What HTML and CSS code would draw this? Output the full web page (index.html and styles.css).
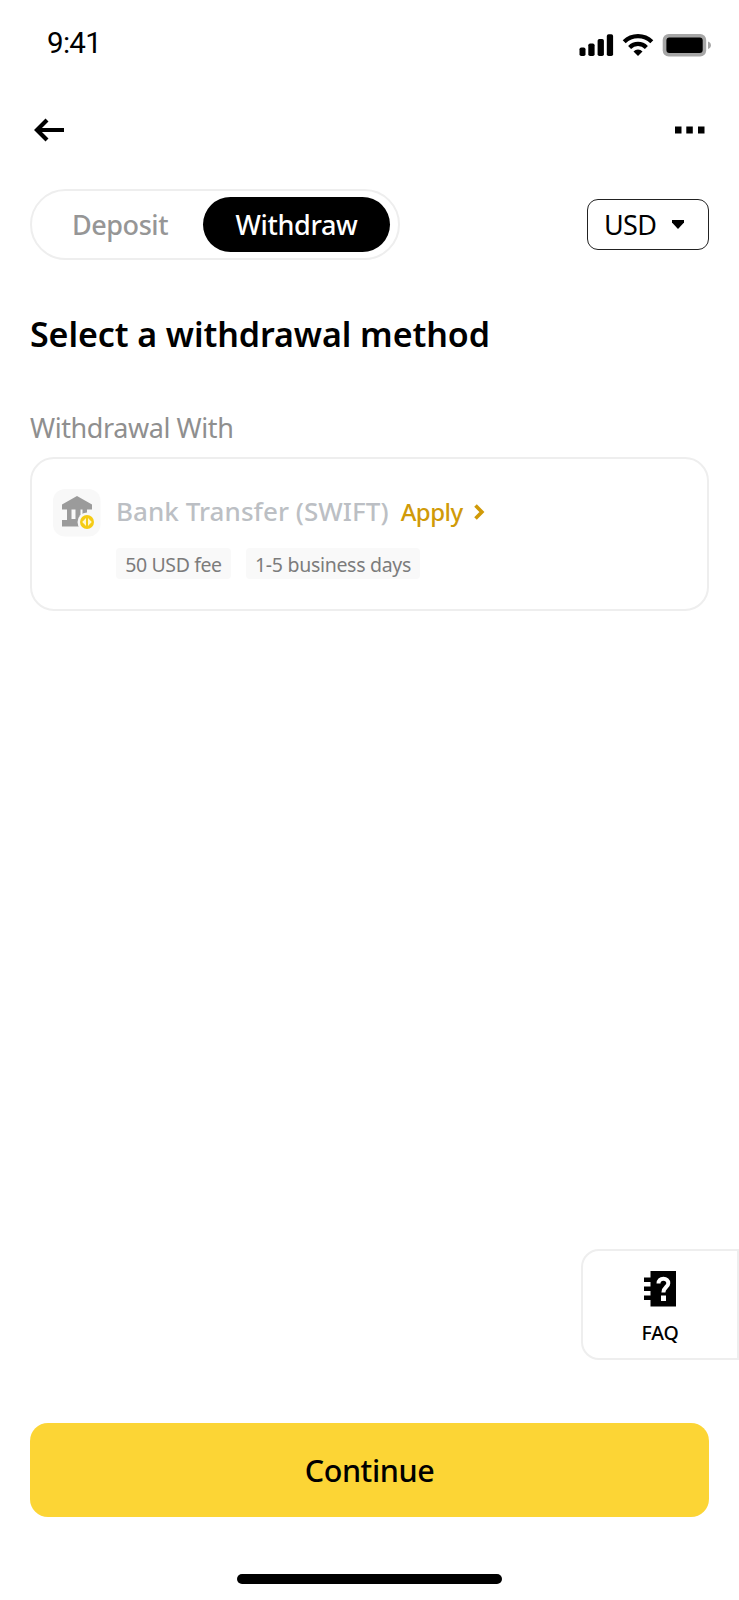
FILE: index.html
```html
<!DOCTYPE html>
<html lang="en">
<head>
<meta charset="utf-8">
<title>Withdraw</title>
<link rel="stylesheet" href="styles.css">
</head>
<body>
<div class="screen">
  <header class="status">
    <span class="time">9:41</span>
    <svg class="status-icons" width="134" height="26" viewBox="0 0 134 26">
      <rect x=".5" y="15.5" width="6" height="8.500" rx="1.800"/>
      <rect x="9.300" y="11.500" width="6.300" height="12.500" rx="1.800"/>
      <rect x="18.600" y="7" width="6.300" height="17" rx="1.800"/>
      <rect x="27.800" y="2.300" width="6.300" height="21.700" rx="1.800"/>
      <g fill="none" stroke="#000" stroke-width="4.200">
        <path d="M45.200 9.800a19.600 19.600 0 0 1 27.600 0"/>
        <path d="M50.600 15.400a11.900 11.900 0 0 1 16.800 0"/>
      </g>
      <path d="M54.500 19.400a6.400 6.400 0 0 1 9 0L59 24z"/>
      <rect x="83.700" y="2" width="43.500" height="22.500" rx="6" fill="#a6a6a6"/>
      <rect x="87.400" y="5.500" width="36.300" height="15.500" rx="3" fill="#000"/>
      <path d="M129 9.500c2.200.7 2.900 2 2.900 3.800s-.7 3-2.900 3.800z" fill="#a6a6a6"/>
    </svg>
  </header>

  <nav class="nav">
    <svg width="32" height="24" viewBox="0 0 32 24" fill="none" stroke="#000" stroke-width="4.200"><path d="M4 12h27M14 2 4 12l10 10"/></svg>
    <svg width="32" height="8" viewBox="0 0 32 8"><path d="M1 .5h6.500v7H1zM12.300.5h6.500v7h-6.500zM24 .5h6.500v7H24z"/></svg>
  </nav>

  <div class="controls">
    <div class="tabs">
      <span class="tab deposit">Deposit</span>
      <span class="tab active">Withdraw</span>
    </div>
    <div class="currency">
      <span class="code">USD</span>
      <svg width="12" height="9" viewBox="0 0 12 9"><path d="M0 0h12v2.600L6 9 0 2.600z"/></svg>
    </div>
  </div>

  <h1 class="title">Select a withdrawal method</h1>
  <p class="label">Withdrawal With</p>

  <section class="card">
    <svg class="bank" width="48" height="48" viewBox="0 0 48 48">
      <rect width="47.500" height="47.500" rx="12" fill="#f8f8f8"/>
      <path d="M24 7 39 15.500v5H34V31H14V20.500H9v-5zM9 31h5v-1h14v7.500H9z" fill="#9b9b9b"/>
      <path d="M18.500 20.500h4V30h-4zM27.500 20.500h2V31h-2z" fill="#f8f8f8"/>
      <circle cx="34" cy="33" r="9.500" fill="#f8f8f8"/>
      <circle cx="34" cy="33" r="7" fill="#f5cb14"/>
      <path d="M33 29v8l-3.800-4zM35 29v8l3.800-4z" fill="#fff7d0"/>
    </svg>
    <div class="details">
      <div class="method">
        <span class="name">Bank Transfer (SWIFT)</span>
        <span class="apply">Apply</span>
        <svg class="chevron" width="11" height="16" viewBox="0 0 11 16" fill="none" stroke="#d09a08" stroke-width="3.600"><path d="m1.500 1.500 6.400 6.500-6.400 6.500"/></svg>
      </div>
      <div class="chips">
        <span class="chip fee">50 USD fee</span>
        <span class="chip days">1-5 business days</span>
      </div>
    </div>
  </section>

  <aside class="faq">
    <svg width="32" height="36" viewBox="0 0 32 36">
      <path d="M6.500 0H32v35.500H6.500V29H0v-4.500h6.500V20H0v-4.500h6.500V11H0V6.500h6.500z"/>
      <path d="M14.500 12.500c0-3.100 2-4.800 4.900-4.800s4.900 1.700 4.900 4.500c0 4-4.900 3.900-4.900 9.300" fill="none" stroke="#fff" stroke-width="4"/>
      <path d="M17 24.500h5V30h-5z" fill="#fff"/>
    </svg>
    <span class="faq-text">FAQ</span>
  </aside>

  <button class="continue"><span>Continue</span></button>
  <div class="home"></div>
</div>
</body>
</html>
```
FILE: styles.css
```css
* { box-sizing: border-box; }
body { margin: 0; background: #fff; color: #000; font-family: "Noto Sans", sans-serif; }
svg { display: block; flex: none; }
.screen { width: 739px; height: 1600px; display: flex; flex-direction: column; overflow: hidden; }

.status { height: 90px; flex: none; padding: 25px 26px 0 47px; display: flex; justify-content: space-between; align-items: flex-start; }
.time { font: 400 29.500px/36px Roboto, sans-serif; letter-spacing: -0.700px; }
.status-icons { margin-top: 7px; }

.nav { height: 80px; flex: none; padding: 0 33px; display: flex; justify-content: space-between; align-items: center; }

.controls { height: 71px; flex: none; margin-top: 19px; padding: 0 30px; display: flex; justify-content: space-between; align-items: center; }
.tabs { width: 370px; height: 71px; border: 2px solid #eee; border-radius: 36px; padding: 0 8px 0 7px; display: flex; align-items: center; justify-content: space-between; }
.tab { font-size: 27px; line-height: 55px; font-weight: 500; white-space: nowrap; text-align: center; }
.deposit { width: 162px; color: #969696; letter-spacing: -0.450px; }
.active { width: 187px; height: 55px; border-radius: 28px; background: #000; color: #fff; letter-spacing: -0.350px; }
.currency { width: 122px; height: 51px; border: 1px solid #222; border-radius: 11px; padding: 0 24px 0 16px; display: flex; align-items: center; justify-content: space-between; }
.code { font-size: 27px; line-height: 49px; letter-spacing: -0.700px; }

.title { margin: 50px 0 0 30px; font-size: 34px; line-height: 48px; font-weight: 600; letter-spacing: -0.080px; white-space: nowrap; }
.label { margin: 51px 0 0 30px; font-size: 27px; line-height: 38px; letter-spacing: -0.420px; color: #8f8f8f; white-space: nowrap; }

.card { width: 679px; height: 154px; flex: none; margin: 10px 0 0 30px; border: 2px solid #eee; border-radius: 24px; padding: 30px 0 0 21px; display: flex; }
.details { margin-left: 15px; }
.method { height: 45px; display: flex; align-items: center; }
.name { margin-top: -2px; font-size: 26px; font-weight: 500; letter-spacing: 0.050px; color: #bcbfc4; white-space: nowrap; }
.apply { margin-left: 12px; font-size: 24px; font-weight: 500; letter-spacing: -0.500px; color: #d09a08; }
.chevron { margin-left: 11px; }
.chips { display: flex; gap: 15px; margin-top: 14px; }
.chip { height: 31px; border-radius: 4px; background: #f9f9f9; color: #7c7c7c; font-size: 19.500px; line-height: 33px; text-align: center; white-space: nowrap; }
.fee { width: 115px; letter-spacing: -0.400px; }
.days { width: 174px; letter-spacing: -0.300px; }

.faq { width: 158px; height: 111px; flex: none; margin: 638px 0 0 581px; border: 2px solid #eee; border-radius: 18px 0 0 18px; display: flex; flex-direction: column; align-items: center; padding-top: 20px; }
.faq-text { margin-top: 12px; font-size: 19.500px; line-height: 28px; font-weight: 500; letter-spacing: -0.200px; }

.continue { width: 679px; height: 94px; flex: none; margin: 63px 0 0 30px; border: 0; border-radius: 18px; background: #fcd535; font: 500 30.500px/40px "Noto Sans", sans-serif; letter-spacing: -0.400px; color: #000; }
.home { width: 265px; height: 10px; flex: none; margin: 57px 0 0 237px; border-radius: 5px; background: #000; }
```
